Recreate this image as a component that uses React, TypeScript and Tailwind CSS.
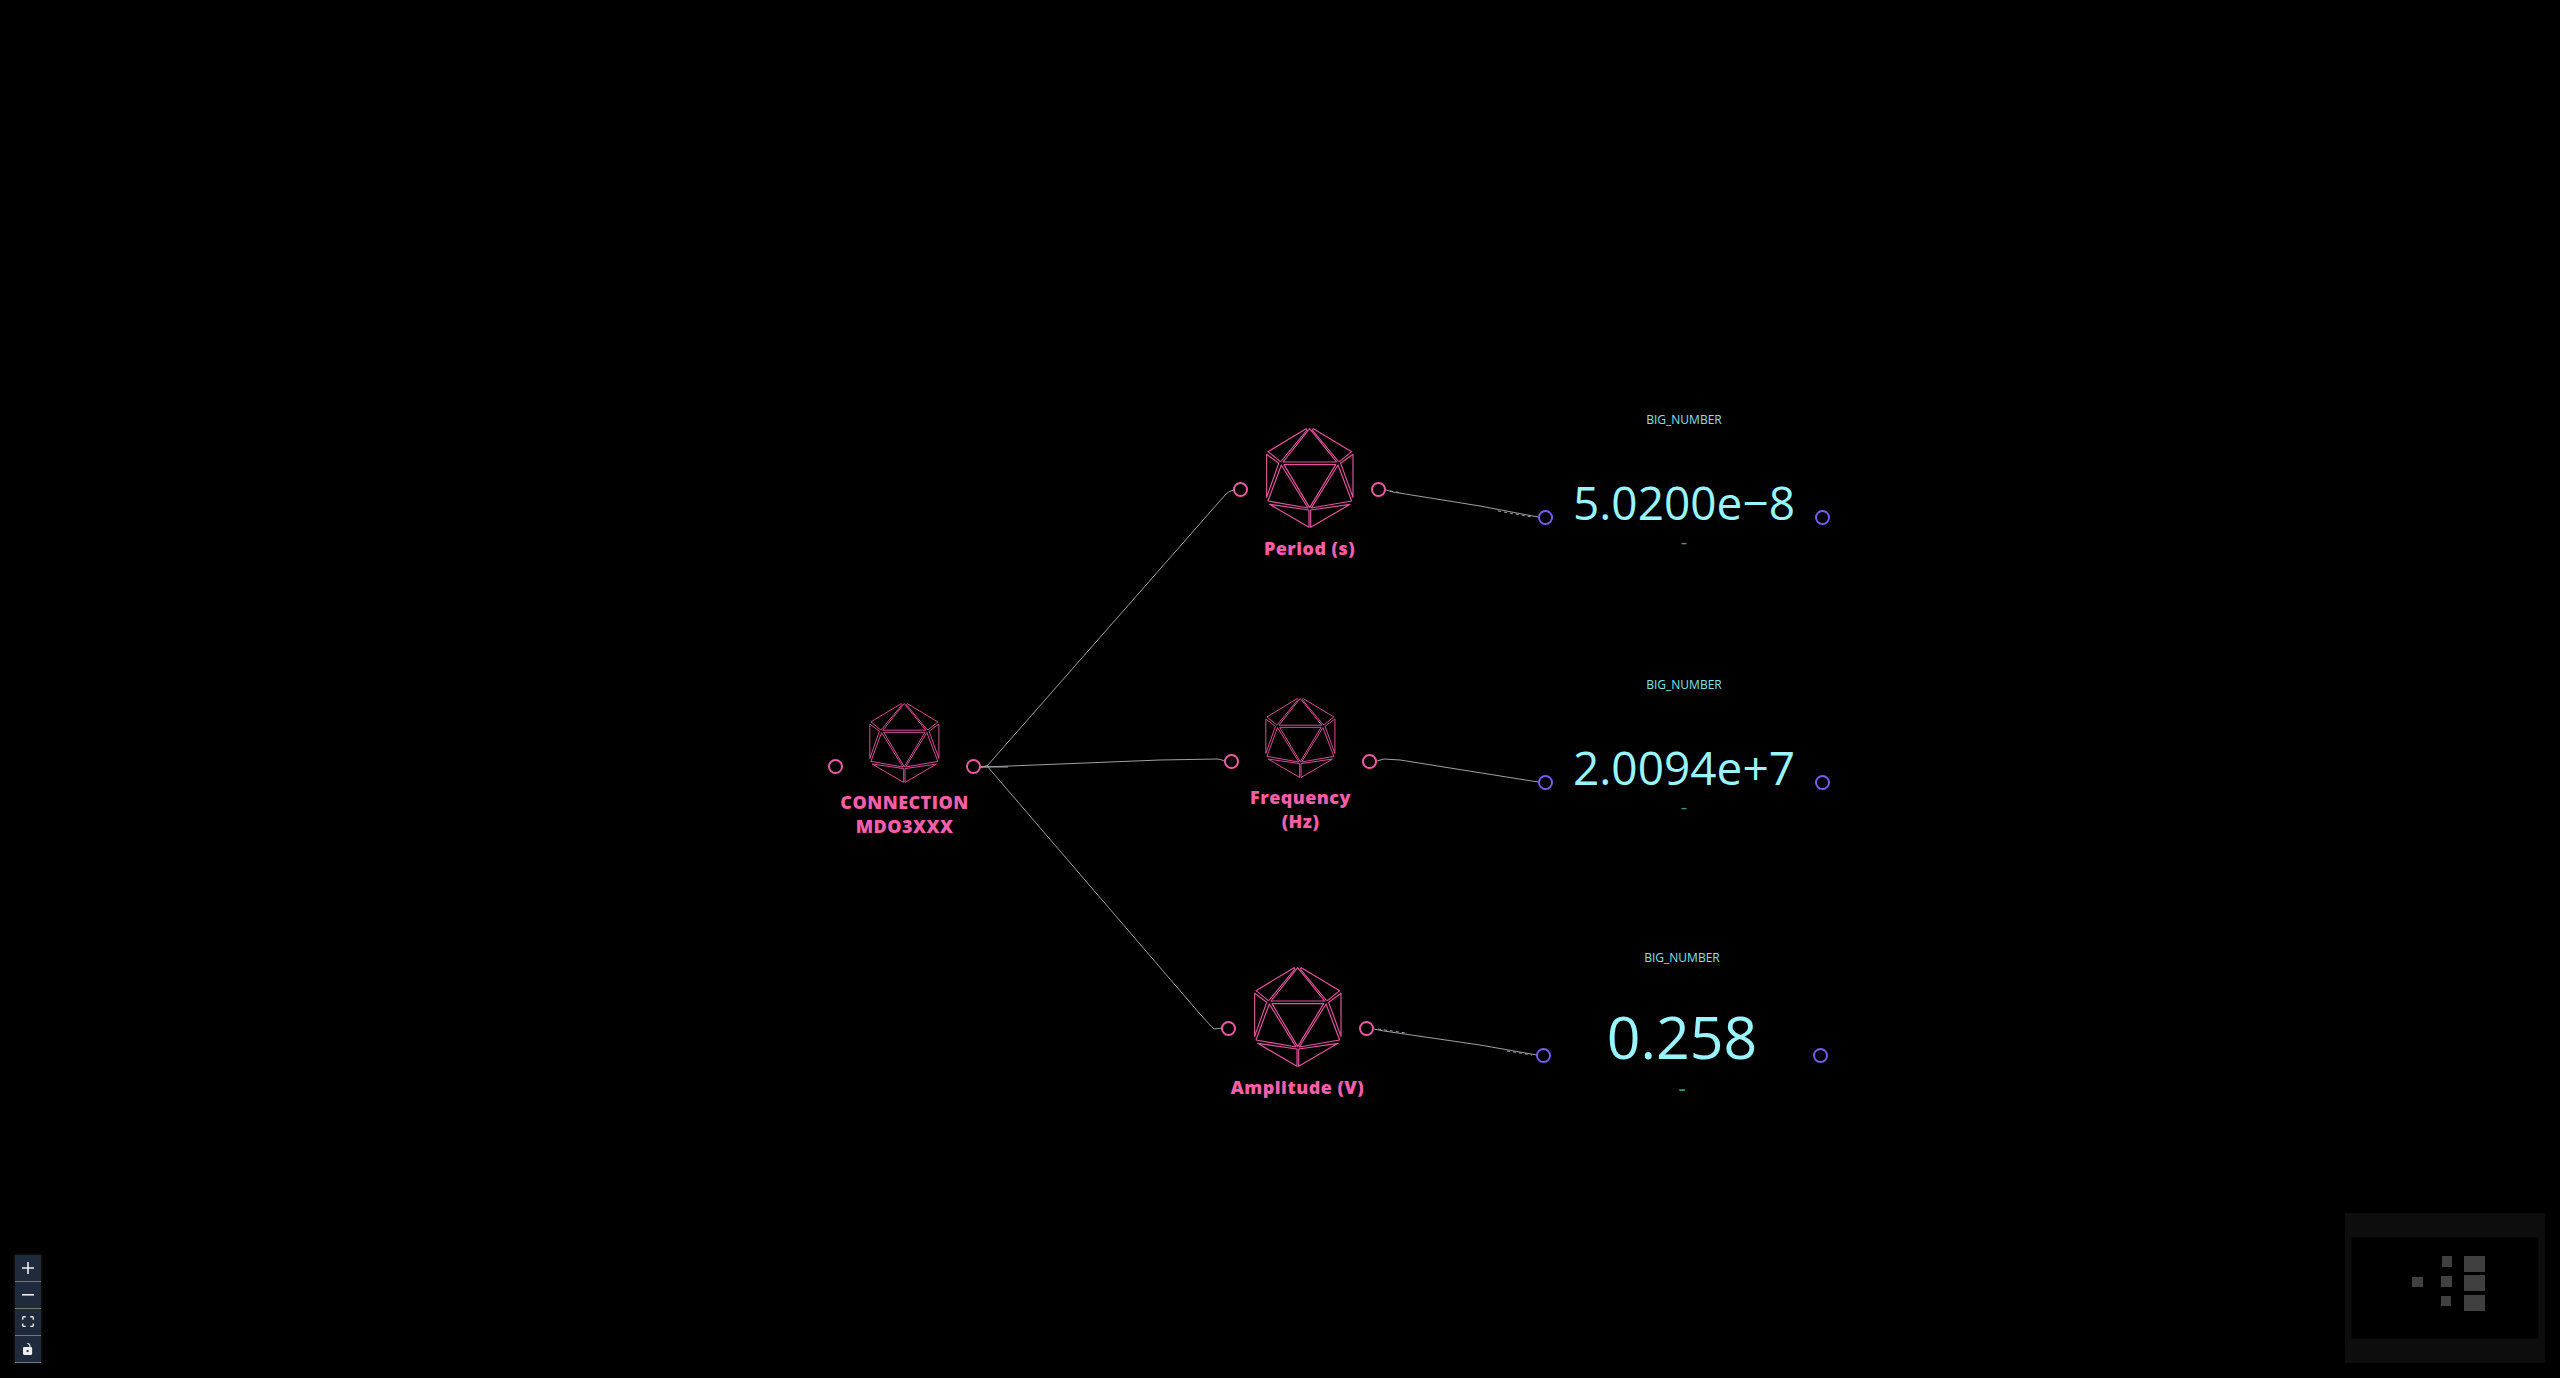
import type { ReactNode } from "react";

type DeviceNode = {
  id: string;
  label: string[];
  left: string;
  top: string;
  big: boolean;
};

const FACES = [
  "M131 2 L51 102 H212 Z",
  "M54 110 H209 L131 239 Z",
  "M120 2 L6 71 L42 100 L46 99 L123 6 Z",
  "M142 2 L257 71 L221 100 L216 99 L139 6 Z",
  "M2 79 L38 106 L2 208 Z",
  "M261 79 L224 106 L261 208 Z",
  "M46 111 L6 219 L126 240 Z",
  "M216 111 L257 219 L136 240 Z",
  "M11 229 L129 246 V298 Z",
  "M252 229 L134 246 V298 Z",
];

const EDGES = [
  "M980 767 L987 766 L1226 494 Q1229 491 1234 490",
  "M980 767 L1010 766 L1160 760 L1217 759 Q1221 759 1224 761",
  "M980 767 L987 766 L1200 1014 Q1210 1025 1214 1029 L1222 1028",
  "M1386 490 L1393 492 L1480 506 L1538 517",
  "M1377 761 L1384 759 L1400 760 L1538 782",
  "M1374 1029 L1384 1031 L1480 1045 L1537 1055",
  "M980 767 H1008",
];

const EDGE_TICKS = ["M1390 491 L1402 493", "M1498 511 L1532 517", "M1378 1029 L1406 1033", "M1507 1051 L1532 1055"];

function Icosahedron({ className }: { className: string }) {
  return (
    <svg viewBox="0 0 264 300" className={className} fill="none" stroke="#e4559f" strokeWidth="3.5" strokeLinejoin="round" aria-hidden="true">
      {FACES.map((d) => (
        <path key={d} d={d} />
      ))}
    </svg>
  );
}

function Handle({ className }: { className: string }) {
  return <span className={`size-[15px] shrink-0 rounded-full border-2 bg-black ${className}`} />;
}

function Device({ label, big }: { label: string[]; big: boolean }) {
  return (
    <div className="relative flex w-[153px] flex-col items-center">
      <Icosahedron className={big ? "h-[100px] w-[88px]" : "h-[80px] w-[71px]"} />
      <h2 className={`text-center text-lg leading-6 font-extrabold tracking-wide text-[#f55fa9] ${big ? "mt-2" : "mt-[7px]"}`}>
        {label.map((line) => (
          <span key={line} className="block whitespace-nowrap">
            {line}
          </span>
        ))}
      </h2>
      <div className={`absolute inset-x-0 flex justify-between ${big ? "top-[54px]" : "top-[56px]"}`}>
        <Handle className="border-[#ee5aa5]" />
        <Handle className="border-[#ee5aa5]" />
      </div>
    </div>
  );
}

function BigNumber({ value, large }: { value: string; large: boolean }) {
  return (
    <div className="relative flex w-[292px] flex-col items-center">
      <h3 className="text-[12px] leading-[22px] text-[#85e0e8]">BIG_NUMBER</h3>
      <p className={`text-[#99f5ff] ${large ? "mt-9 text-[59px] leading-[62px]" : "mt-12 text-[46px] leading-[46px]"}`}>{value}</p>
      <p className={`text-[#3d9970] ${large ? "text-[24px] leading-[42px]" : "text-[20px] leading-[34px]"}`}>-</p>
      <div className="absolute inset-x-0 top-[101px] flex justify-between">
        <Handle className="border-[#795af5]" />
        <Handle className="border-[#795af5]" />
      </div>
    </div>
  );
}

function ControlButton({ label, children }: { label: string; children: ReactNode }) {
  return (
    <button type="button" aria-label={label} className="flex h-[27px] w-[26px] items-center justify-center border-b border-[#777] bg-[#1f2a3c] text-[#eee]">
      {children}
    </button>
  );
}

function Controls() {
  return (
    <div className="absolute bottom-[15px] left-[15px] flex flex-col shadow-[0_0_2px_1px_rgba(255,255,255,0.08)]">
      <ControlButton label="Zoom in">
        <svg viewBox="0 0 32 32" className="size-3" fill="currentColor">
          <path d="M32 18.133H18.133V32h-4.266V18.133H0v-4.266h13.867V0h4.266v13.867H32z" />
        </svg>
      </ControlButton>
      <ControlButton label="Zoom out">
        <svg viewBox="0 0 32 5" className="w-3" fill="currentColor">
          <path d="M0 0h32v4.2H0z" />
        </svg>
      </ControlButton>
      <ControlButton label="Fit view">
        <svg viewBox="0 0 32 30" className="w-3" fill="currentColor">
          <path d="M3.692 4.63c0-.53.4-.938.939-.938h5.215V0H4.708C2.13 0 0 2.054 0 4.63v5.216h3.692V4.631zM27.354 0h-5.2v3.692h5.17c.53 0 .984.4.984.939v5.215H32V4.631A4.624 4.624 0 0027.354 0zm.954 24.83c0 .532-.4.94-.939.94h-5.215v3.768h5.215c2.577 0 4.631-2.13 4.631-4.707v-5.139h-3.692v5.139zm-23.677.94c-.531 0-.939-.4-.939-.94v-5.138H0v5.139c0 2.577 2.13 4.707 4.708 4.707h5.138V25.77H4.631z" />
        </svg>
      </ControlButton>
      <ControlButton label="Toggle interactivity">
        <svg viewBox="0 0 25 32" className="h-3" fill="currentColor">
          <path d="M21.333 10.667H19.81V7.619C19.81 3.429 16.38 0 12.19 0c-4.114 1.828-1.37 2.133.305 2.438 1.676.305 4.42 2.59 4.42 5.181v3.048H3.047A3.056 3.056 0 000 13.714v15.238A3.056 3.056 0 003.048 32h18.285a3.056 3.056 0 003.048-3.048V13.714a3.056 3.056 0 00-3.048-3.047zM12.19 24.533a3.056 3.056 0 01-3.047-3.047 3.056 3.056 0 013.047-3.048 3.056 3.056 0 013.048 3.048 3.056 3.056 0 01-3.048 3.047z" />
        </svg>
      </ControlButton>
    </div>
  );
}

function MiniMap() {
  return (
    <svg viewBox="0 0 200 150" className="absolute right-[15px] bottom-[15px] h-[150px] w-[200px]" role="img" aria-label="Mini map" shapeRendering="crispEdges">
      <rect width="200" height="150" fill="#0d0d0d" />
      <rect x="6" y="24" width="188" height="102" fill="#070707" />
      <rect x="7" y="25" width="186" height="100" fill="#000" />
      <g fill="#404040">
        <rect x="67" y="64" width="11" height="10" />
        <rect x="97" y="43" width="10" height="11" />
        <rect x="96" y="63" width="11" height="11" />
        <rect x="96" y="83" width="10" height="10" />
        <rect x="119" y="43" width="21" height="16" />
        <rect x="119" y="62" width="21" height="16" />
        <rect x="119" y="82" width="21" height="16" />
      </g>
    </svg>
  );
}

const DEVICES: DeviceNode[] = [
  { id: "connection", label: ["CONNECTION", "MDO3XXX"], left: "left-[828px]", top: "top-[703px]", big: false },
  { id: "period", label: ["Period (s)"], left: "left-[1233px]", top: "top-[428px]", big: true },
  { id: "frequency", label: ["Frequency", "(Hz)"], left: "left-[1224px]", top: "top-[698px]", big: false },
  { id: "amplitude", label: ["Amplitude (V)"], left: "left-[1221px]", top: "top-[967px]", big: true },
];

const NUMBERS = [
  { id: "period-value", value: "5.0200e−8", place: "left-[1538px] top-[409px]", large: false },
  { id: "frequency-value", value: "2.0094e+7", place: "left-[1538px] top-[674px]", large: false },
  { id: "amplitude-value", value: "0.258", place: "left-[1536px] top-[947px]", large: true },
];

export default function App() {
  return (
    <main className="relative h-screen w-full overflow-hidden bg-black font-['Open_Sans','Noto_Sans',sans-serif]">
      <svg className="absolute inset-0 size-full" fill="none" stroke="#a0a0a5" strokeWidth="1" aria-hidden="true">
        {EDGES.map((d) => (
          <path key={d} d={d} />
        ))}
        {EDGE_TICKS.map((d) => (
          <path key={d} d={d} strokeDasharray="3 3" />
        ))}
      </svg>
      {DEVICES.map((node) => (
        <div key={node.id} className={`absolute ${node.left} ${node.top}`}>
          <Device label={node.label} big={node.big} />
        </div>
      ))}
      {NUMBERS.map((node) => (
        <div key={node.id} className={`absolute ${node.place}`}>
          <BigNumber value={node.value} large={node.large} />
        </div>
      ))}
      <Controls />
      <MiniMap />
    </main>
  );
}
